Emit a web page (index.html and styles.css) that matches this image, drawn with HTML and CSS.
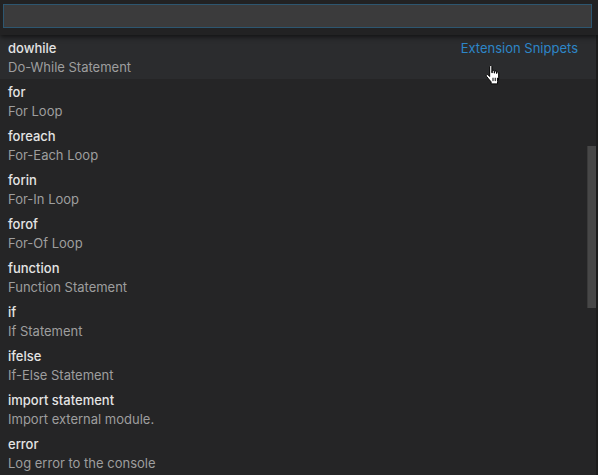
FILE: index.html
```html
<!DOCTYPE html>
<html>
<head>
<meta charset="utf-8">
<link rel="stylesheet" href="styles.css">
</head>
<body>
<div class="widget">
  <div class="header">
    <div class="input"></div>
  </div>
  <div class="list">
    <div class="rows">
      <div class="row selected">
        <div class="line"><span class="label">dowhile</span><span class="source">Extension Snippets</span></div>
        <div class="desc">Do-While Statement</div>
      </div>
      <div class="row"><div class="line"><span class="label">for</span></div><div class="desc">For Loop</div></div>
      <div class="row"><div class="line"><span class="label">foreach</span></div><div class="desc">For-Each Loop</div></div>
      <div class="row"><div class="line"><span class="label">forin</span></div><div class="desc">For-In Loop</div></div>
      <div class="row"><div class="line"><span class="label">forof</span></div><div class="desc">For-Of Loop</div></div>
      <div class="row"><div class="line"><span class="label">function</span></div><div class="desc">Function Statement</div></div>
      <div class="row"><div class="line"><span class="label">if</span></div><div class="desc">If Statement</div></div>
      <div class="row"><div class="line"><span class="label">ifelse</span></div><div class="desc">If-Else Statement</div></div>
      <div class="row"><div class="line"><span class="label">import statement</span></div><div class="desc">Import external module.</div></div>
      <div class="row"><div class="line"><span class="label">error</span></div><div class="desc">Log error to the console</div></div>
    </div>
    <div class="scrollbar"><div class="thumb"></div></div>
    <svg class="cursor" width="16" height="20" viewBox="0 0 14 18">
      <path d="M4 1.5c0-.8.5-1.2 1-1.2s1 .4 1 1.2V7h.3V5.8c0-.7.4-1 .9-1s.9.3.9 1V7.3h.3V6.3c0-.7.4-1 .9-1s.9.3.9 1v1.3h.3V7c0-.6.4-.9.8-.9s.8.3.8.9v4.6c0 1.6-.4 2.600-1 3.5V17H5.3v-1.8C4.4 14 3 12.6 1.3 10.4c-.5-.7-.4-1.3 0-1.6.5-.4 1.1-.2 1.6.4L4 10.4z" fill="#fff" stroke="#000" stroke-width="0.9"/>
      <path d="M7 11.5v3M9 11.5v3M11 11.5v3" stroke="#000" stroke-width="0.9"/>
    </svg>
  </div>
</div>
</body>
</html>
```
FILE: styles.css
```css
* { box-sizing: border-box; }
html, body { margin: 0; padding: 0; background: #252526; }
body { width: 598px; height: 475px; overflow: hidden; font-family: "Inter", "Liberation Sans", sans-serif; }
.widget { width: 598px; height: 475px; display: flex; flex-direction: column; background: #252526; }
.header { height: 36px; padding: 4px 6px 0 3px; background: #222223; box-shadow: 0 2px 5px rgba(0,0,0,0.6); position: relative; z-index: 1; }
.input { height: 24px; background: #3b3b3c; border: 1px solid #2d5670; }
.list { flex: 1; position: relative; background: #252526; }
.row { height: 44px; padding: 4px 20px 0 8px; }
.row.selected { background: #2b2c2e; }
.line { display: flex; justify-content: space-between; align-items: baseline; height: 19px; }
.label { color: #e4e4e4; font-size: 13px; line-height: 19px; font-weight: 500; }
.source { color: #2d86c8; font-size: 13px; line-height: 19px; }
.desc { color: #9e9e9e; font-size: 13px; line-height: 19px; }
.scrollbar { position: absolute; top: 0; right: 0; bottom: 0; width: 12px; padding-top: 111px; padding-left: 1px; border-right: 2px solid #1c1c1c; }
.thumb { width: 9px; height: 162px; background: #474747; border-left: 1px solid #3a3a3a; }
.cursor { position: absolute; left: 485px; top: 30px; }
```
